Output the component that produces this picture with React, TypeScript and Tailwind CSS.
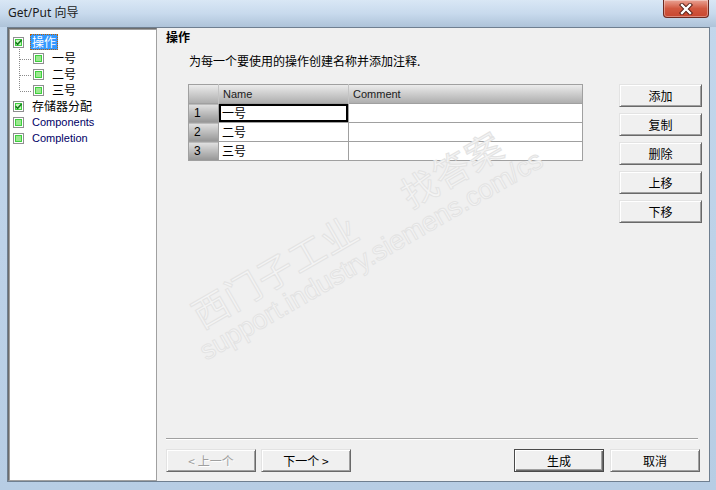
import React from "react";

// SimSun-like text: CJK font at 12px
const cjk = "font-['Noto_Sans_CJK_SC','Noto_Sans',sans-serif]";
const latin = "font-['Liberation_Sans','Noto_Sans_CJK_SC',sans-serif]";

const TreeBox = ({ checked }: { checked?: boolean }) => (
  <svg width="11" height="11" viewBox="0 0 11 11" className="shrink-0">
    <rect x="0.5" y="0.5" width="10" height="10" fill="#ffffff" stroke="#8e8f8f" />
    <rect x="2" y="2" width="7" height="7" fill="#3fcf3f" />
    <rect x="3" y="3" width="5" height="5" fill={checked ? "#c9f5c0" : "#9be88f"} />
    {checked && (
      <path d="M2.5 5.2 L4.6 7.4 L8.6 3" fill="none" stroke="#157a1c" strokeWidth="1.6" />
    )}
  </svg>
);

const TreeRow = ({
  label,
  checked,
  child,
  selected,
  en,
}: {
  label: string;
  checked?: boolean;
  child?: boolean;
  selected?: boolean;
  en?: boolean;
}) => (
  <div className={`h-[16px] flex items-center gap-[6px] ${child ? "pl-[23px]" : "pl-[3px]"}`}>
    <TreeBox checked={checked} />
    <span
      className={`h-[16px] px-[2px] flex items-center leading-none ${en ? `${latin} text-[11px]` : `${cjk} text-[12px]`} ${
        selected
          ? "bg-[#3399ff] text-white outline outline-1 outline-dotted outline-[#c06000] -outline-offset-1"
          : en
          ? "text-[#000066]"
          : "text-black"
      }`}
    >
      {label}
    </span>
  </div>
);

const WinButton = ({
  children,
  className = "",
  disabled,
  isDefault,
}: {
  children: React.ReactNode;
  className?: string;
  disabled?: boolean;
  isDefault?: boolean;
}) => (
  <button
    className={`h-[23px] flex items-center justify-center bg-[#f0f0f0] text-[12px] leading-none ${cjk} ${
      isDefault
        ? "border border-[#4a4a4a] shadow-[inset_1px_1px_0_#ffffff,inset_-1px_-1px_0_#696969,inset_-2px_-2px_0_#a0a0a0]"
        : "border border-t-[#e3e3e3] border-l-[#e3e3e3] border-r-[#696969] border-b-[#696969] shadow-[inset_1px_1px_0_#ffffff,inset_-1px_-1px_0_#a0a0a0]"
    } ${disabled ? "text-[#a0a0a0] [text-shadow:1px_1px_0_#ffffff]" : "text-black"} ${className}`}
  >
    {children}
  </button>
);

const rows = ["一号", "二号", "三号"];

export default function App() {
  return (
    <div className="w-[716px] h-[490px] flex flex-col bg-linear-to-b from-[#c3d7ec] to-[#b7cde4] overflow-hidden">
      {/* Title bar */}
      <div className="relative h-[27px] shrink-0 flex items-center pl-[8px] bg-linear-to-b from-[#d9e7f5] via-[#c8daed] to-[#aec3d9]">
        <span className="text-[12px] text-[#1b1b1b] font-['Noto_Sans','Noto_Sans_CJK_SC',sans-serif] leading-none -mt-[1px]">
          Get/Put 向导
        </span>
        <div className="absolute right-[7px] top-0 w-[46px] h-[18px] rounded-b-[4px] border border-t-0 border-[#6d2a21] bg-linear-to-b from-[#e9a294] via-[#d15840] to-[#c8462f] flex items-center justify-center shadow-[inset_0_0_0_1px_rgba(255,255,255,0.35)]">
          <svg width="16" height="12" viewBox="0 0 16 12">
            <path d="M4 2 L12 10 M12 2 L4 10" stroke="#4f1a12" strokeWidth="4.2" strokeLinecap="square" />
            <path d="M4 2 L12 10 M12 2 L4 10" stroke="#ffffff" strokeWidth="2.4" strokeLinecap="square" />
          </svg>
        </div>
      </div>

      {/* Client area */}
      <div className="relative flex-1 ml-[7px] mr-[6px] mb-[8px] flex bg-[#f0f0f0] border border-[#6f7f90] overflow-hidden">
        {/* Tree panel */}
        <div className="relative w-[149px] shrink-0 bg-white border border-t-[#6d6d6d] border-l-[#6d6d6d] border-r-[#a0a0a0] border-b-[#a0a0a0] shadow-[inset_1px_1px_0_#a0a0a0] pt-[5px] pl-[1px]">
          <svg className="absolute left-[1px] top-[1px]" width="30" height="70">
            <line x1="9.5" y1="19" x2="9.5" y2="61" stroke="#8a8a8a" strokeDasharray="1 1" />
            <line x1="10" y1="29.5" x2="22" y2="29.5" stroke="#8a8a8a" strokeDasharray="1 1" />
            <line x1="10" y1="45.5" x2="22" y2="45.5" stroke="#8a8a8a" strokeDasharray="1 1" />
            <line x1="10" y1="61.5" x2="22" y2="61.5" stroke="#8a8a8a" strokeDasharray="1 1" />
          </svg>
          <div className="relative flex flex-col">
            <TreeRow label="操作" checked selected />
            <TreeRow label="一号" child />
            <TreeRow label="二号" child />
            <TreeRow label="三号" child />
            <TreeRow label="存储器分配" checked />
            <TreeRow label="Components" en />
            <TreeRow label="Completion" en />
          </div>
        </div>

        {/* Page content */}
        <div className="relative flex-1 flex flex-col pl-[9px] pr-[9px]">
          <div className={`mt-[1px] h-[16px] flex items-center text-[12px] font-bold text-black ${cjk}`}>操作</div>
          <div className={`mt-[8px] ml-[23px] h-[16px] flex items-center text-[12px] text-black ${cjk}`}>
            为每一个要使用的操作创建名称并添加注释.
          </div>

          <div className="mt-[15px] flex items-start justify-between">
            <table className="ml-[22px] w-[395px] border-collapse border border-[#a0a0a0] table-fixed">
              <colgroup>
                <col className="w-[30px]" />
                <col className="w-[130px]" />
                <col />
              </colgroup>
              <thead>
                <tr className="h-[19px] bg-linear-to-b from-[#ececec] to-[#ababab]">
                  <th className="border-r border-[#c4c4c4] p-0" />
                  <th className={`border-r border-[#c4c4c4] p-0 pl-[4px] text-left font-normal text-[11px] leading-[18px] text-[#202020] ${latin}`}>Name</th>
                  <th className={`p-0 pl-[4px] text-left font-normal text-[11px] leading-[18px] text-[#202020] ${latin}`}>Comment</th>
                </tr>
              </thead>
              <tbody>
                {rows.map((r, i) => (
                  <tr key={r} className="h-[19px]">
                    <td className={`p-0 pl-[5px] leading-[18px] border-t border-[#a0a0a0] bg-linear-to-b from-[#e2e2e2] to-[#959595] text-[12px] text-black ${latin}`}>
                      {i + 1}
                    </td>
                    <td
                      className={`p-0 pl-[3px] leading-[18px] border border-[#a0a0a0] bg-white text-[12px] text-black ${cjk} ${
                        i === 0 ? "shadow-[inset_0_0_0_2px_#000000]" : ""
                      }`}
                    >
                      {r}
                    </td>
                    <td className="p-0 border border-[#a0a0a0] bg-white" />
                  </tr>
                ))}
              </tbody>
            </table>

            <div className="w-[83px] -mr-[2px] flex flex-col gap-[6px]">
              <WinButton>添加</WinButton>
              <WinButton>复制</WinButton>
              <WinButton>删除</WinButton>
              <WinButton>上移</WinButton>
              <WinButton>下移</WinButton>
            </div>
          </div>

          <div className="flex-1" />

          <div className="mr-[2px] h-[2px] border-t border-[#a0a0a0] border-b border-b-white" />
          <div className="mt-[9px] mb-[9px] flex items-center">
            <WinButton className="w-[90px]" disabled>
              &lt; 上一个
            </WinButton>
            <WinButton className="w-[90px] ml-[5px]">下一个 &gt;</WinButton>
            <div className="flex-1" />
            <WinButton className="w-[90px]" isDefault>
              生成
            </WinButton>
            <WinButton className="w-[90px] ml-[6px]">取消</WinButton>
          </div>
        </div>

        {/* Watermark overlay */}
        <div className="pointer-events-none absolute inset-0 overflow-hidden">
          <div
            className={`absolute left-[186px] top-[270px] h-[36px] leading-[36px] whitespace-nowrap origin-[0%_50%] rotate-[-30deg] text-[36px] tracking-[1px] text-[#f4f4f4] [-webkit-text-stroke:1px_#e3e3e3] ${cjk}`}
          >
            西门子工业<span className="ml-[56px]">找答案</span>
          </div>
          <div
            className={`absolute left-[194px] top-[312px] h-[27px] leading-[27px] whitespace-nowrap origin-[0%_50%] rotate-[-30deg] text-[27px] text-[#f4f4f4] [-webkit-text-stroke:1px_#e3e3e3] ${latin}`}
          >
            support.industry.siemens.com/cs
          </div>
        </div>
      </div>
    </div>
  );
}
